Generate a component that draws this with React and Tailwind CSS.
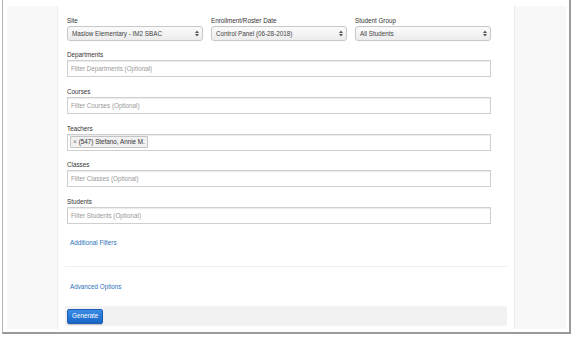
import React from "react";

function Arrows() {
  return (
    <svg width="4" height="7" viewBox="0 0 4 7" className="shrink-0">
      <path d="M0 3 L2 0.5 L4 3 Z" fill="#555" />
      <path d="M0 4 L2 6.5 L4 4 Z" fill="#555" />
    </svg>
  );
}

function Select({ text }) {
  return (
    <div className="flex w-full items-center justify-between h-[15px] shrink-0 rounded-[3px] border border-[#c8c8c8] bg-gradient-to-b from-[#fbfbfb] to-[#ececec] pl-[4px] pr-[3px] text-[#444] shadow-[0_0.5px_0_rgba(0,0,0,0.05)]">
      <span>{text}</span>
      <Arrows />
    </div>
  );
}

function Field({ label, children }) {
  return (
    <div className="mb-[9.75px]">
      <div className="h-[9px] leading-[9px] mb-[1px] text-[#333]">{label}</div>
      <div className="h-[17px] border border-[#cfcfcf] bg-white shadow-[inset_0_1px_1px_rgba(0,0,0,0.08)] flex items-center px-[2px]">
        {children}
      </div>
    </div>
  );
}

function Placeholder({ children }) {
  return <span className="pl-[1px] text-[#9a9a9a]">{children}</span>;
}

export default function App() {
  return (
    <div
      className="w-[572px] h-[337px] bg-white text-[6.3px] overflow-hidden"
      style={{ fontFamily: '"Liberation Sans", Arial, sans-serif' }}
    >
      <div className="ml-[2px] w-[569px] h-[334px] border-l border-l-[#b4b4b4] border-r-2 border-r-[#9c9c9c] border-b-2 border-b-[#9a9a9a] bg-white flex pt-[6px] pl-[4px] pr-[3px] pb-[3px]">
        <div className="w-[51px] h-[323px] bg-[#f8f8f8] border-r border-r-[#efefef]"></div>
        <div className="w-[456px] flex flex-col px-[7px]">
          <div className="pl-[2px] pr-[16px] pt-[10px]">
            <div className="flex gap-[8px] mb-[9px]">
              <div className="flex flex-col flex-1">
                <div className="h-[9px] leading-[9px] mb-[1px] text-[#333]">Site</div>
                <Select text="Maslow Elementary - IM2 SBAC" />
              </div>
              <div className="flex flex-col flex-1">
                <div className="h-[9px] leading-[9px] mb-[1px] text-[#333]">Enrollment/Roster Date</div>
                <Select text="Control Panel (06-28-2018)" />
              </div>
              <div className="flex flex-col flex-1">
                <div className="h-[9px] leading-[9px] mb-[1px] text-[#333]">Student Group</div>
                <Select text="All Students" />
              </div>
            </div>
            <Field label="Departments">
              <Placeholder>Filter Departments (Optional)</Placeholder>
            </Field>
            <Field label="Courses">
              <Placeholder>Filter Courses (Optional)</Placeholder>
            </Field>
            <Field label="Teachers">
              <div className="h-[12px] flex items-center px-[2px] border border-[#c4c4c4] bg-[#f1f1f1] rounded-[1px] text-[#333]">
                <span className="text-[#777] mr-[2px]">×</span>
                <span>(547) Stefano, Annie M.</span>
              </div>
            </Field>
            <Field label="Classes">
              <Placeholder>Filter Classes (Optional)</Placeholder>
            </Field>
            <Field label="Students">
              <Placeholder>Filter Students (Optional)</Placeholder>
            </Field>
            <div className="pl-[3px] mt-[14px] h-[9px] leading-[9px] text-[#2e72b8]">Additional Filters</div>
          </div>
          <div className="mt-[19px] border-t border-t-[#eeeeee]"></div>
          <div className="pl-[5px] mt-[15px] h-[9px] leading-[9px] text-[#2e72b8]">Advanced Options</div>
          <div className="mt-[15px] h-[20px] bg-[#f2f2f2] flex items-center pl-[2px]">
            <div className="h-[15px] px-[4px] flex items-center rounded-[2px] border border-[#1c5fb4] bg-gradient-to-b from-[#3a8ce6] to-[#1766c6] text-white shadow-[0_1px_1px_rgba(0,0,0,0.2)]">
              Generate
            </div>
          </div>
        </div>
        <div className="w-[52px] h-[323px] bg-[#f8f8f8] border-l border-l-[#ececec]"></div>
      </div>
    </div>
  );
}
